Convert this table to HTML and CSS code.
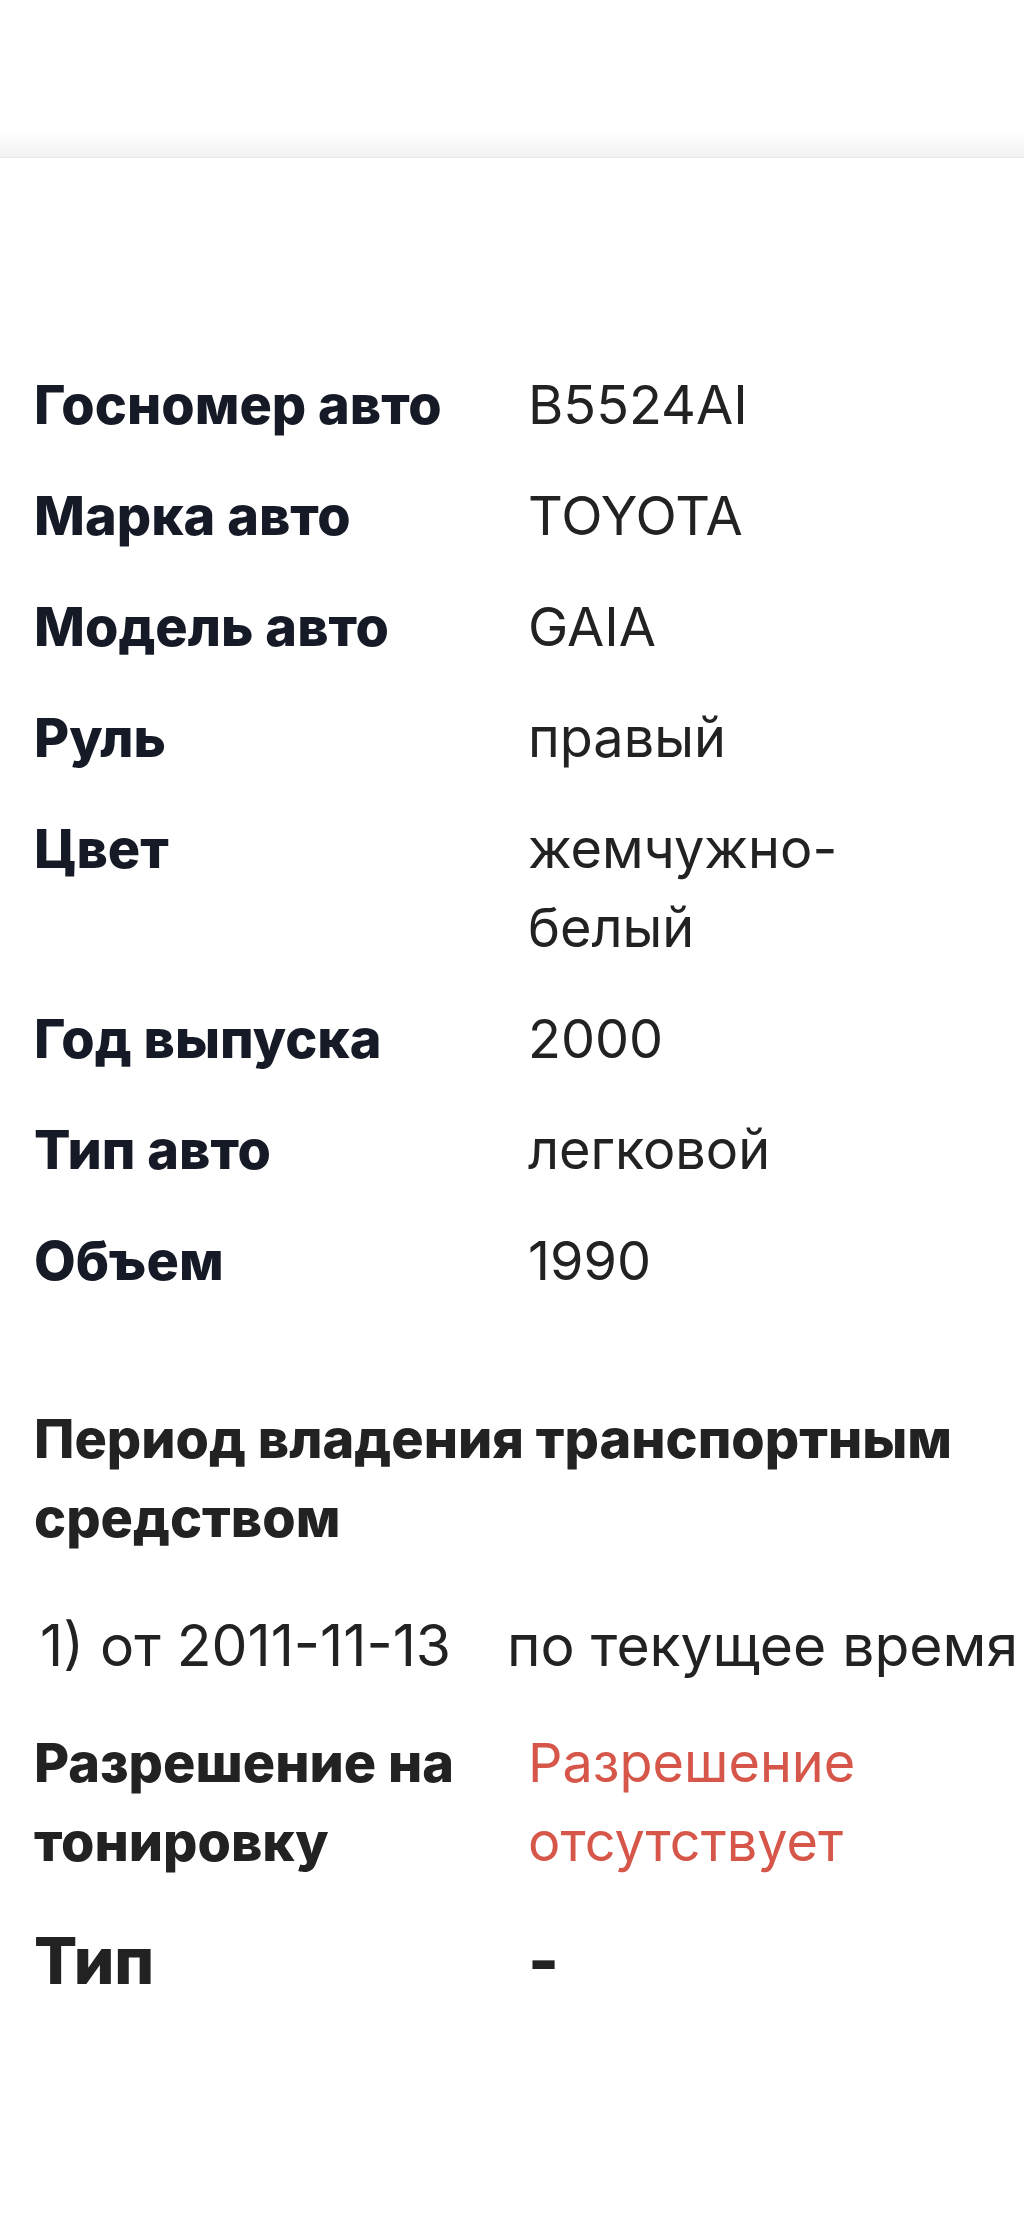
FILE: index.html
```html
<!DOCTYPE html>
<html lang="ru">
<head>
<meta charset="utf-8">
<title>Информация об авто</title>
<link rel="stylesheet" href="styles.css">
</head>
<body>
<header class="topbar"></header>
<main class="content">
  <dl class="specs">
    <dt class="label">Госномер авто</dt><dd class="value">B5524AI</dd>
    <dt class="label">Марка авто</dt><dd class="value">TOYOTA</dd>
    <dt class="label">Модель авто</dt><dd class="value">GAIA</dd>
    <dt class="label">Руль</dt><dd class="value">правый</dd>
    <dt class="label">Цвет</dt><dd class="value">жемчужно-белый</dd>
    <dt class="label">Год выпуска</dt><dd class="value">2000</dd>
    <dt class="label">Тип авто</dt><dd class="value">легковой</dd>
    <dt class="label">Объем</dt><dd class="value">1990</dd>
  </dl>
  <section class="ownership">
    <h2 class="ownership-title">Период владения транспортным средством</h2>
    <p class="period"><span>1) от 2011-11-13</span><span>по текущее время</span></p>
  </section>
  <dl class="specs specs-extra">
    <dt class="label label-alt">Разрешение на тонировку</dt><dd class="value value-red">Разрешение отсутствует</dd>
    <dt class="label label-alt label-big">Тип</dt><dd class="value value-dash">-</dd>
  </dl>
</main>
</body>
</html>
```

FILE: styles.css
```css
html, body {
  margin: 0;
  padding: 0;
  background: #fff;
}
body {
  font-family: "Inter", "Noto Sans", sans-serif;
  color: #222;
}
.topbar {
  height: 157px;
  background: linear-gradient(to bottom, #fff 0, #fff 132px, #f1f1f1 157px);
  border-bottom: 1px solid #e9e9e9;
}
.content {
  padding: 0 34px 200px 34px;
}
.specs {
  display: grid;
  grid-template-columns: 494px 400px;
  row-gap: 32px;
  margin: 207px 0 0;
}
.specs dt, .specs dd {
  margin: 0;
}
.label {
  font-family: "Inter", sans-serif;
  font-weight: 800;
  font-size: 54px;
  line-height: 79px;
  color: #161a26;
}
.value {
  font-family: "Inter", sans-serif;
  font-weight: 400;
  font-size: 54px;
  line-height: 79px;
  color: #222;
}
.ownership {
  margin-top: 99px;
}
.ownership-title {
  margin: 0;
  font-family: "Inter", sans-serif;
  font-weight: 800;
  font-size: 54px;
  line-height: 79px;
  color: #222;
}
.period {
  display: flex;
  gap: 56px;
  margin: 49px 0 0;
  padding-left: 6px;
  font-family: "Inter", sans-serif;
  font-size: 57px;
  line-height: 79px;
  white-space: nowrap;
  color: #222;
}
.specs-extra {
  margin-top: 38px;
  row-gap: 40px;
}
.label-alt {
  color: #222;
}
.label-big {
  font-size: 64px;
}
.value-red {
  color: #d6574a;
}
.value-dash {
  font-weight: 800;
  font-size: 66px;
}
```
